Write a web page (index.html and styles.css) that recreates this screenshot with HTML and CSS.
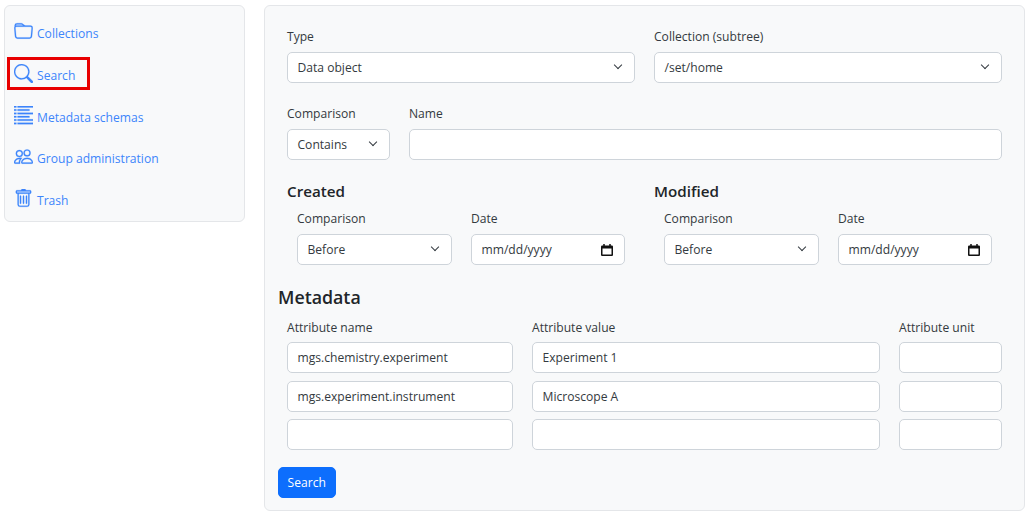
FILE: index.html
```html
<!DOCTYPE html>
<html lang="en">
<head>
<meta charset="utf-8">
<title>Search</title>
<link rel="stylesheet" href="styles.css">
</head>
<body>
<div class="page">
  <nav class="sidebar">
    <a class="nav-item"><svg class="icon" viewBox="0 0 16 16"><path d="M.54 3.87.5 3a2 2 0 0 1 2-2h3.672a2 2 0 0 1 1.414.586l.828.828A2 2 0 0 0 9.828 3h3.982a2 2 0 0 1 1.992 2.181l-.637 7A2 2 0 0 1 13.174 14H2.826a2 2 0 0 1-1.991-1.819l-.637-7a1.99 1.99 0 0 1 .342-1.31zM2.19 4a1 1 0 0 0-.996 1.09l.637 7a1 1 0 0 0 .995.91h10.348a1 1 0 0 0 .995-.91l.637-7A1 1 0 0 0 13.81 4H2.19zm4.69-1.707A1 1 0 0 0 6.172 2H2.5a1 1 0 0 0-1 .981l.006.139C1.72 3.042 1.95 3 2.19 3h5.396l-.707-.707z"/></svg><span>Collections</span></a>
    <a class="nav-item active"><svg class="icon" viewBox="0 0 16 16"><path d="M11.742 10.344a6.5 6.5 0 1 0-1.397 1.398h-.001c.03.04.062.078.098.115l3.85 3.85a1 1 0 0 0 1.415-1.414l-3.85-3.85a1.007 1.007 0 0 0-.115-.1zM12 6.5a5.5 5.5 0 1 1-11 0 5.5 5.5 0 0 1 11 0z"/></svg><span>Search</span></a>
    <a class="nav-item"><svg class="icon" viewBox="0 0 16 16"><path d="M0 0h2v1.300H0zM3 0h13v1.300H3zM0 2.800h2v1.300H0zM3 2.800h10v1.300H3zM0 5.600h2v1.300H0zM3 5.600h13v1.300H3zM0 8.400h2v1.300H0zM3 8.400h10v1.300H3zM0 11.200h2v1.300H0zM3 11.200h13v1.300H3zM0 14h2v1.300H0zM3 14h13v1.300H3z"/></svg><span>Metadata schemas</span></a>
    <a class="nav-item"><svg class="icon" viewBox="0 0 16 16"><path d="M15 14s1 0 1-1-1-4-5-4-5 3-5 4 1 1 1 1h8Zm-7.978-1A.261.261 0 0 1 7 12.996c.001-.264.167-1.03.76-1.72C8.312 10.629 9.282 10 11 10c1.717 0 2.687.63 3.24 1.276.593.69.758 1.457.76 1.72l-.008.002a.274.274 0 0 1-.014.002H7.022ZM11 7a2 2 0 1 0 0-4 2 2 0 0 0 0 4Zm3-2a3 3 0 1 1-6 0 3 3 0 0 1 6 0ZM6.936 9.28a5.88 5.88 0 0 0-1.23-.247A7.35 7.35 0 0 0 5 9c-4 0-5 3-5 4 0 .667.333 1 1 1h4.216A2.238 2.238 0 0 1 5 13c0-1.01.377-2.042 1.09-2.904.243-.294.526-.569.846-.816ZM4.92 10A5.493 5.493 0 0 0 4 13H1c0-.26.164-1.03.76-1.724.545-.636 1.492-1.256 3.16-1.275ZM1.500 5.500a3 3 0 1 1 6 0 3 3 0 0 1-6 0Zm3-2a2 2 0 1 0 0 4 2 2 0 0 0 0-4Z"/></svg><span>Group administration</span></a>
    <a class="nav-item"><svg class="icon" viewBox="0 0 16 16"><path d="M5.500 5.500A.5.5 0 0 1 6 6v6a.5.5 0 0 1-1 0V6a.5.5 0 0 1 .5-.5zm2.500 0a.5.5 0 0 1 .5.5v6a.5.5 0 0 1-1 0V6a.5.5 0 0 1 .5-.5zm3 .5a.5.5 0 0 0-1 0v6a.5.5 0 0 0 1 0V6z"/><path fill-rule="evenodd" d="M14.500 3a1 1 0 0 1-1 1H13v9a2 2 0 0 1-2 2H5a2 2 0 0 1-2-2V4h-.5a1 1 0 0 1-1-1V2a1 1 0 0 1 1-1H6a1 1 0 0 1 1-1h2a1 1 0 0 1 1 1h3.500a1 1 0 0 1 1 1v1zM4.118 4 4 4.059V13a1 1 0 0 0 1 1h6a1 1 0 0 0 1-1V4.059L11.882 4H4.118zM2.500 3V2h11v1h-11z"/></svg><span>Trash</span></a>
  </nav>
  <main class="panel">
    <div class="row cols-2">
      <div class="field"><label>Type</label><div class="select">Data object</div></div>
      <div class="field"><label>Collection (subtree)</label><div class="select">/set/home</div></div>
    </div>
    <div class="row cols-name">
      <div class="field"><label>Comparison</label><div class="select">Contains</div></div>
      <div class="field"><label>Name</label><div class="input"></div></div>
    </div>
    <div class="row cols-2 dates">
      <section>
        <h5>Created</h5>
        <div class="date-row">
          <div class="field"><label>Comparison</label><div class="select">Before</div></div>
          <div class="field"><label>Date</label><div class="input date">mm/dd/yyyy<svg class="cal" viewBox="0 0 16 16"><path d="M3 0h2v2h6V0h2v2h1.500A1.500 1.500 0 0 1 16 3.500v11a1.500 1.500 0 0 1-1.500 1.500h-13A1.500 1.500 0 0 1 0 14.500v-11A1.500 1.500 0 0 1 1.500 2H3zM2 6v8h12V6z"/></svg></div></div>
        </div>
      </section>
      <section>
        <h5>Modified</h5>
        <div class="date-row">
          <div class="field"><label>Comparison</label><div class="select">Before</div></div>
          <div class="field"><label>Date</label><div class="input date">mm/dd/yyyy<svg class="cal" viewBox="0 0 16 16"><path d="M3 0h2v2h6V0h2v2h1.500A1.500 1.500 0 0 1 16 3.500v11a1.500 1.500 0 0 1-1.500 1.500h-13A1.500 1.500 0 0 1 0 14.500v-11A1.500 1.500 0 0 1 1.500 2H3zM2 6v8h12V6z"/></svg></div></div>
        </div>
      </section>
    </div>
    <h4>Metadata</h4>
    <div class="meta">
      <label>Attribute name</label><label>Attribute value</label><label>Attribute unit</label>
      <div class="input">mgs.chemistry.experiment</div><div class="input">Experiment 1</div><div class="input"></div>
      <div class="input">mgs.experiment.instrument</div><div class="input">Microscope A</div><div class="input"></div>
      <div class="input"></div><div class="input"></div><div class="input"></div>
    </div>
    <button class="btn" type="button">Search</button>
  </main>
</div>
</body>
</html>
```
FILE: styles.css
```css
*, *::before, *::after { box-sizing: border-box; }
html, body { margin: 0; height: 100%; background: #fff; }
body { font-family: "Open Sans", "Noto Sans", sans-serif; font-size: 12.1px; color: #212529; }
.page { display: flex; align-items: flex-start; gap: 19.500px; padding: 5px 7px 0 4px; }
.sidebar { width: 240.500px; height: 217px; flex: none; background: #f8f9fa; border: 1px solid #e4e6e9; border-radius: 6px; padding: 7px 10px 0 9px; display: flex; flex-direction: column; gap: 4.75px; }
.nav-item { position: relative; display: flex; align-items: flex-end; height: 37px; color: #3d85fb; gap: 4px; padding-bottom: 8px; }
.nav-item span { line-height: 16px; }
.active::before { content: ""; position: absolute; left: -7px; top: 2.500px; width: 83px; height: 33px; border: 3px solid #e80000; }
.icon { width: 19px; height: 19px; fill: #3d85fb; stroke: #3d85fb; stroke-width: 0.2; flex: none; margin-bottom: 1px; }
.panel { flex: 1; height: 506px; background: #f8f9fa; border: 1px solid #e4e6e9; border-radius: 6px; padding: 22px 13px 0; }
label { display: block; line-height: 17px; height: 17px; margin-bottom: 7px; color: #343a40; }
.row { display: grid; column-gap: 19px; padding: 0 9px 0 9px; margin-bottom: 22px; }
.cols-2 { grid-template-columns: 348px 348px; }
.cols-name { grid-template-columns: 103px 593px; margin-bottom: 20px; }
.dates { margin-bottom: 0; }
.dates section { min-width: 0; }
h5 { margin: 0; font-size: 15.200px; font-weight: 600; line-height: 22px; color: #212529; }
h4 { margin: 20px 0 0; font-size: 17.800px; font-weight: 600; line-height: 25px; color: #212529; }
.date-row { display: grid; grid-template-columns: 155px 154px; column-gap: 19px; padding-left: 10px; margin-top: 8px; }
.select, .input { height: 31px; background-color: #fff; border: 1px solid #ced4da; border-radius: 5px; padding: 0 9.500px; display: flex; align-items: center; color: #343a40; white-space: nowrap; }
.select { position: relative; }
.select::after { content: ""; position: absolute; right: 13px; top: 9px; width: 6px; height: 6px; border-right: 1.500px solid #343a40; border-bottom: 1.500px solid #343a40; transform: rotate(45deg); }
.date { justify-content: space-between; padding-right: 11px; }
.cal { width: 12px; height: 12px; fill: #111; }
.meta { display: grid; grid-template-columns: 226px 348px 103px; column-gap: 19px; row-gap: 7.500px; padding-left: 9px; margin-top: 9px; }
.meta label { height: 15.500px; margin-bottom: 0; }
.btn { display: block; margin-top: 17px; margin-left: -0.5px; width: 58.500px; height: 31px; padding: 0; border: 1px solid #0d6efd; border-radius: 5px; background: #0d6efd; color: #fff; font: inherit; }
```
